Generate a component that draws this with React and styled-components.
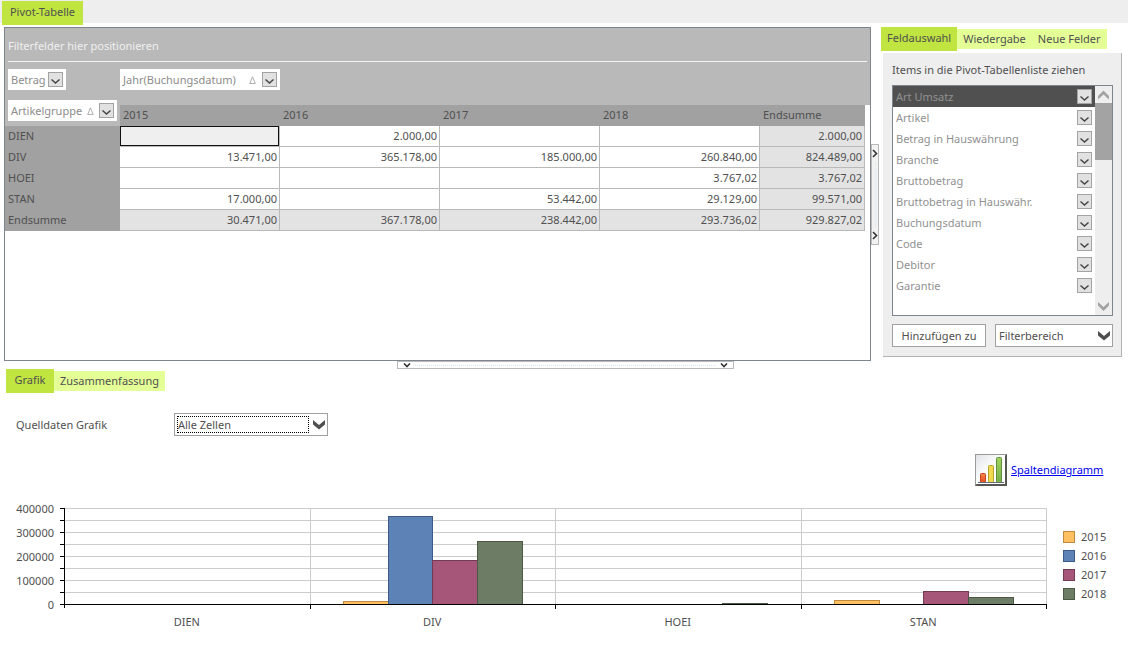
import React, { useState } from "react";
import styled, { createGlobalStyle } from "styled-components";

const GlobalStyle = createGlobalStyle`
    * {
        box-sizing: border-box;
    }

    body {
        margin: 0;
        background: #fff;
        color: #505050;
        font-family: "Noto Sans", "Open Sans", sans-serif;
        font-size: 11px;
        line-height: 16px;
    }

    button, select {
        color: inherit;
        font: inherit;
    }
`;

const TopBar = styled.header`
    display: flex;
    height: 23px;
    padding: 1px 2px 0;
    background: #eee;
`;

const TabList = styled.div`
    display: flex;
    align-items: center;
    height: 24px;
    padding-left: ${props => props.$indent || "0"};
`;

const Tab = styled.button`
    min-width: ${props => props.$minWidth || "48px"};
    height: ${props => props.$active ? "24px" : "20px"};
    padding: 0 6px;
    padding-bottom: ${props => props.$active ? "2px" : "0"};
    border: 0;
    background: ${props => props.$active ? "#c0e440" : "#e4ff96"};
    white-space: nowrap;
    cursor: pointer;
`;

const Workspace = styled.main`
    display: flex;
    align-items: stretch;
    padding: 4px 6px 0 4px;
`;

const PivotPanel = styled.section`
    flex: 1;
    min-width: 0;
    min-height: 334px;
    border: 1px solid #7e858e;
`;

const FieldArea = styled.div`
    height: 77px;
    padding: 0 3px;
    background: #b9b9b9;
`;

const FilterZone = styled.div`
    height: 34px;
    padding: 10px 0 0 0;
    border-bottom: 1px solid #f4f4f4;
    color: #f0f0f0;
`;

const FilterChips = styled.div`
    display: grid;
    grid-template-columns: 112px auto;
    justify-content: start;
    padding-top: 7px;
`;

const ChipBox = styled.div`
    display: flex;
    align-items: center;
    gap: ${props => props.$gap || "2px"};
    width: ${props => props.$width};
    height: 21px;
    padding: 0 3px;
    background: #fff;
    color: #8c8c8c;
    font-weight: 400;
`;

const ChipText = styled.span`
    flex: 1;
    white-space: nowrap;
`;

const DropButton = styled.button`
    display: grid;
    place-items: center;
    flex: none;
    width: 15px;
    height: 15px;
    padding: 4px 0 0;
    border: 1px solid #a3a3a3;
    background: #e1e1e1;
    cursor: pointer;
`;

const PivotTable = styled.table`
    width: calc(100% - 5px);
    border-collapse: separate;
    border-spacing: 0;
    table-layout: fixed;
`;

const HeadCell = styled.th`
    width: ${props => props.$width || "auto"};
    height: 21px;
    padding: 0 3px 1px;
    background: #a1a1a1;
    font-weight: 400;
    text-align: left;
`;

const CornerCell = styled.th`
    width: 115px;
    padding: 0 3px;
    background: #b9b9b9;
    text-align: left;
`;

const CornerChip = styled.div`
    margin: -5px 0 5px;
`;

const RowHead = styled.th`
    height: 21px;
    padding: 0 3px 1px;
    background: #a1a1a1;
    font-weight: 400;
    text-align: left;
`;

const Cell = styled.td`
    height: 21px;
    padding: 0 2px;
    border-right: 1px solid #b9b9b9;
    border-bottom: 1px solid #b9b9b9;
    background: ${props => props.$total ? "#e3e3e3" : props.$selected ? "#efefef" : "#fff"};
    box-shadow: ${props => props.$selected ? "inset 0 0 0 1px #111" : "none"};
    text-align: right;
`;

const Splitter = styled.button`
    display: flex;
    flex-direction: ${props => props.$vertical ? "column" : "row"};
    align-items: center;
    justify-content: space-between;
    align-self: ${props => props.$vertical ? "flex-start" : "center"};
    width: ${props => props.$vertical ? "8px" : "337px"};
    height: ${props => props.$vertical ? "101px" : "8px"};
    margin-top: ${props => props.$vertical ? "117px" : "0"};
    padding: ${props => props.$vertical ? "4px 0" : "0 5px"};
    border: 1px solid #b9b9b9;
    background: ${props => props.$vertical ? "#f2f2f2" : "#fff"};
    cursor: pointer;
`;

const Grip = styled.span`
    flex: 1;
    margin: 4px;
    border: 0 dotted #d5e6ef;
    border-width: ${props => props.$vertical ? "0 0 0 1px" : "1px 0 0 0"};
`;

const FieldColumn = styled.aside`
    flex: none;
    width: 241px;
    margin-left: 2px;
`;

const FieldPanel = styled.div`
    margin: 2px 0 0 2px;
    padding: 9px 8px 9px 9px;
    border-right: 1px solid #b3b3b3;
    border-bottom: 1px solid #b3b3b3;
    background: #eee;
`;

const FieldBox = styled.div`
    display: flex;
    height: 231px;
    margin-top: 7px;
    border: 1px solid #7e858e;
    background: #fff;
`;

const FieldList = styled.ul`
    flex: 1;
    margin: 0;
    padding: 0;
    list-style: none;
`;

const FieldItem = styled.li`
    display: flex;
    align-items: center;
    justify-content: space-between;
    height: 21px;
    padding: 0 3px;
    background: ${props => props.$selected ? "#505050" : "transparent"};
    color: #919191;
`;

const ScrollBar = styled.div`
    display: flex;
    flex-direction: column;
    align-items: center;
    width: 17px;
    background: #eee;
`;

const ScrollThumb = styled.div`
    width: 100%;
    height: 57px;
    margin-bottom: auto;
    background: #a3a3a3;
`;

const FieldActions = styled.div`
    display: grid;
    grid-template-columns: 94px 118px;
    justify-content: space-between;
    margin-top: 8px;
`;

const ActionButton = styled.button`
    height: 23px;
    padding: 0;
    border: 1px solid #a0a0a0;
    background: #fff;
    cursor: pointer;
`;

const SelectFrame = styled.div`
    display: grid;
    align-items: center;
    width: ${props => props.$width || "100%"};
    height: 23px;
    border: 1px solid #a0a0a0;
    background: #fff;

    > * {
        grid-area: 1 / 1;
    }

    > svg {
        justify-self: end;
        margin-right: 2px;
        pointer-events: none;
    }
`;

const StyledSelect = styled.select`
    width: 100%;
    height: 100%;
    padding: 0 18px 0 3px;
    border: 0;
    outline: 0;
    background: transparent;
    appearance: none;
`;

const FocusRing = styled.span`
    height: 17px;
    margin: 0 18px 0 2px;
    border: 1px dotted #000;
    pointer-events: none;
`;

const SplitRow = styled.div`
    display: flex;
    flex-direction: column;
    height: 8px;
    padding-left: 3px;
`;

const SourceRow = styled.div`
    display: flex;
    align-items: center;
    padding: 20px 16px 0;
`;

const SourceLabel = styled.label`
    width: 158px;
`;

const ChartTypeRow = styled.div`
    display: flex;
    align-items: center;
    justify-content: flex-end;
    gap: 4px;
    padding: 18px 23px 0 0;
`;

const ChartLink = styled.a`
    min-width: 94px;
    color: #00e;
    text-decoration: underline;
`;

const ChartArea = styled.figure`
    display: grid;
    grid-template-columns: 1fr 65px;
    margin: 22px 0 0;
    padding: 0 0 12px 64px;
`;

const PlotSvg = styled.svg`
    width: calc(100% - 17px);
    height: 128px;
    overflow: visible;
    fill: #505050;
`;

const Legend = styled.ul`
    display: flex;
    flex-direction: column;
    gap: 3px;
    margin: 0;
    padding: 21px 0 0;
    list-style: none;
`;

const LegendItem = styled.li`
    display: flex;
    align-items: center;
    gap: 6px;
`;

const Swatch = styled.span`
    width: 12px;
    height: 12px;
    border: 1px solid ${props => props.$edge};
    background: ${props => props.$fill};
`;

const years = ["2015", "2016", "2017", "2018"];

const rows = [
    { name: "DIEN", cells: ["", "2.000,00", "", "", "2.000,00"] },
    { name: "DIV", cells: ["13.471,00", "365.178,00", "185.000,00", "260.840,00", "824.489,00"] },
    { name: "HOEI", cells: ["", "", "", "3.767,02", "3.767,02"] },
    { name: "STAN", cells: ["17.000,00", "", "53.442,00", "29.129,00", "99.571,00"] },
    { name: "Endsumme", cells: ["30.471,00", "367.178,00", "238.442,00", "293.736,02", "929.827,02"] }
];

const fields = [
    "Art Umsatz", "Artikel", "Betrag in Hauswährung", "Branche", "Bruttobetrag",
    "Bruttobetrag in Hauswähr.", "Buchungsdatum", "Code", "Debitor", "Garantie"
];

const series = [
    { name: "2015", fill: "#ffc062", edge: "#bf8a3e" },
    { name: "2016", fill: "#5d82b5", edge: "#3c5a85" },
    { name: "2017", fill: "#a55679", edge: "#733a54" },
    { name: "2018", fill: "#6c7c65", edge: "#4b5946" }
];

const chartData = [
    { name: "DIEN", values: [0, 0, 0, 0] },
    { name: "DIV", values: [13471, 365178, 185000, 260840] },
    { name: "HOEI", values: [0, 0, 0, 3767] },
    { name: "STAN", values: [17000, 0, 53442, 29129] }
];

const SmallChevron = () => (
    <svg width="9" height="5" viewBox="0 0 9 5">
        <path d="M0.5 0.5L4.5 4L8.5 0.5" fill="none" stroke="#444" strokeWidth="1.4" />
    </svg>
);

const SelectChevron = () => (
    <svg width="12" height="10" viewBox="0 0 12 10">
        <path d="M0 0L6 5L12 0V4.5L6 9.5L0 4.5Z" fill="#505050" />
    </svg>
);

const ScrollArrow = ({ up }) => (
    <svg width="17" height="17" viewBox="0 0 17 17">
        <path
            d={up ? "M3 10L8.5 4.5L14 10V13.5L8.5 8.5L3 13.5Z" : "M3 4L8.5 9L14 4V7.5L8.5 13L3 7.5Z"}
            fill="#a3a3a3"
        />
    </svg>
);

const SplitArrow = ({ vertical }) => (
    vertical
        ? <svg width="6" height="9" viewBox="0 0 6 9"><path d="M1 1L4.5 4.5L1 8" fill="none" stroke="#333" strokeWidth="1.6" /></svg>
        : <svg width="8" height="5" viewBox="0 0 8 5"><path d="M1 0.5L4 3.5L7 0.5" fill="none" stroke="#333" strokeWidth="1.6" /></svg>
);

const SortMark = () => (
    <svg width="7" height="8" viewBox="0 0 7 8">
        <path d="M3.5 0.8L6.3 7.5H0.7Z" fill="none" stroke="#999" strokeWidth="0.8" />
    </svg>
);

const ColumnChartIcon = () => (
    <svg width="32" height="32" viewBox="0 0 32 32">
        <defs>
            <linearGradient id="iconBack" x1="0" y1="0" x2="1" y2="1">
                <stop offset="0" stopColor="#dfe3e6" />
                <stop offset="0.5" stopColor="#fff" />
            </linearGradient>
            <linearGradient id="iconGreen" x1="0" y1="0" x2="0" y2="1">
                <stop offset="0" stopColor="#a3d45c" />
                <stop offset="1" stopColor="#78b04a" />
            </linearGradient>
            <linearGradient id="iconRed" x1="0" y1="0" x2="0" y2="1">
                <stop offset="0" stopColor="#f58a4a" />
                <stop offset="1" stopColor="#e64d1e" />
            </linearGradient>
        </defs>
        <rect width="32" height="32" fill="#9a9a9a" />
        <path d="M32 0V32H0L2 30H30V2Z" fill="#555" />
        <rect x="1" y="1" width="29" height="29" fill="url(#iconBack)" />
        <rect x="5.5" y="19.5" width="5" height="9" rx="1" fill="url(#iconRed)" stroke="#c9401c" />
        <rect x="13.5" y="11.5" width="5" height="17" rx="1" fill="#f0d94e" stroke="#b5a428" />
        <rect x="21.5" y="3.5" width="5" height="25" rx="1" fill="url(#iconGreen)" stroke="#5f9040" />
        <path d="M3 28.5H29" stroke="#6b6b78" />
    </svg>
);

const Chip = ({ text, width, gap, sorted }) => (
    <ChipBox $width={width} $gap={gap}>
        <ChipText>{text}</ChipText>
        {sorted && <SortMark />}
        <DropButton aria-label={`${text} filtern`}><SmallChevron /></DropButton>
    </ChipBox>
);

const Tabs = ({ names, indent, minWidth }) => {
    const [active, setActive] = useState(names[0]);

    return (
        <TabList role="tablist" $indent={indent}>
            {names.map(name => (
                <Tab
                    key={name}
                    role="tab"
                    aria-selected={active === name}
                    $active={active === name}
                    $minWidth={minWidth}
                    onClick={() => setActive(name)}
                >
                    {name}
                </Tab>
            ))}
        </TabList>
    );
};

const Pivot = () => (
    <PivotPanel>
        <FieldArea>
            <FilterZone>Filterfelder hier positionieren</FilterZone>
            <FilterChips>
                <Chip text="Betrag" width="58px" />
                <Chip text="Jahr(Buchungsdatum)" width="160px" gap="6px" sorted />
            </FilterChips>
        </FieldArea>
        <PivotTable>
            <thead>
                <tr>
                    <CornerCell>
                        <CornerChip><Chip text="Artikelgruppe" width="109px" gap="5px" sorted /></CornerChip>
                    </CornerCell>
                    {years.map(year => <HeadCell key={year} scope="col">{year}</HeadCell>)}
                    <HeadCell scope="col" $width="105px">Endsumme</HeadCell>
                </tr>
            </thead>
            <tbody>
                {rows.map((row, rowIndex) => (
                    <tr key={row.name}>
                        <RowHead scope="row">{row.name}</RowHead>
                        {row.cells.map((cell, index) => (
                            <Cell
                                key={index}
                                $total={index === 4 || rowIndex === 4}
                                $selected={index === 0 && rowIndex === 0}
                            >
                                {cell}
                            </Cell>
                        ))}
                    </tr>
                ))}
            </tbody>
        </PivotTable>
    </PivotPanel>
);

const FieldChooser = () => (
    <FieldColumn>
        <Tabs names={["Feldauswahl", "Wiedergabe", "Neue Felder"]} />
        <FieldPanel>
            Items in die Pivot-Tabellenliste ziehen
            <FieldBox>
                <FieldList>
                    {fields.map((field, index) => (
                        <FieldItem key={field} $selected={index === 0}>
                            {field}
                            <DropButton aria-label={`${field} filtern`}><SmallChevron /></DropButton>
                        </FieldItem>
                    ))}
                </FieldList>
                <ScrollBar>
                    <ScrollArrow up />
                    <ScrollThumb />
                    <ScrollArrow />
                </ScrollBar>
            </FieldBox>
            <FieldActions>
                <ActionButton>Hinzufügen zu</ActionButton>
                <SelectFrame>
                    <StyledSelect aria-label="Zielbereich">
                        <option>Filterbereich</option>
                    </StyledSelect>
                    <SelectChevron />
                </SelectFrame>
            </FieldActions>
        </FieldPanel>
    </FieldColumn>
);

const plotHeight = 96;
const maxValue = 400000;
const groupWidth = 100 / chartData.length;
const barWidth = groupWidth / 5.5;

const ColumnChart = () => (
    <ChartArea>
        <PlotSvg role="img" aria-label="Spaltendiagramm">
            <g shapeRendering="crispEdges">
                {[...Array(9).keys()].map(i => (
                    <React.Fragment key={i}>
                        <rect x="0" y={i * 12} width="100%" height="1" fill="#ccc" />
                        <rect x="-4" y={i * 12} width="4" height="1" fill="#000" />
                    </React.Fragment>
                ))}
                {chartData.map((group, i) => (
                    <rect key={group.name} x={`${(i + 1) * groupWidth}%`} y="0" width="1" height={plotHeight} fill="#ccc" />
                ))}
                <g transform="translate(0.5 0.5)">
                    {chartData.map((group, i) => group.values.map((value, j) => value > 0 && (
                        <rect
                            key={`${group.name}-${j}`}
                            x={`${i * groupWidth + (j + 0.75) * barWidth}%`}
                            y={plotHeight - Math.round(value / maxValue * plotHeight)}
                            width={`${barWidth}%`}
                            height={Math.round(value / maxValue * plotHeight)}
                            fill={series[j].fill}
                            stroke={series[j].edge}
                        />
                    )))}
                </g>
                <rect x="0" y="0" width="1" height="100" fill="#000" />
                <rect x="0" y={plotHeight} width="100%" height="1" fill="#000" />
                {chartData.map((group, i) => (
                    <rect key={group.name} x={`${(i + 1) * groupWidth}%`} y={plotHeight} width="1" height="5" fill="#000" />
                ))}
            </g>
            {[400000, 300000, 200000, 100000, 0].map((tick, i) => (
                <text key={tick} x="-10" y={i * 24 + 5} textAnchor="end">{tick}</text>
            ))}
            {chartData.map((group, i) => (
                <text key={group.name} x={`${(i + 0.5) * groupWidth}%`} y="118" textAnchor="middle">
                    {group.name}
                </text>
            ))}
        </PlotSvg>
        <Legend>
            {series.map(item => (
                <LegendItem key={item.name}>
                    <Swatch $fill={item.fill} $edge={item.edge} />
                    {item.name}
                </LegendItem>
            ))}
        </Legend>
    </ChartArea>
);

const App = () => (
    <>
        <GlobalStyle />
        <TopBar>
            <Tabs names={["Pivot-Tabelle"]} minWidth="81px" />
        </TopBar>
        <Workspace>
            <Pivot />
            <Splitter $vertical aria-label="Feldliste ausblenden">
                <SplitArrow vertical />
                <Grip $vertical />
                <SplitArrow vertical />
            </Splitter>
            <FieldChooser />
        </Workspace>
        <SplitRow>
            <Splitter aria-label="Grafik ausblenden">
                <SplitArrow />
                <Grip />
                <SplitArrow />
            </Splitter>
        </SplitRow>
        <Tabs names={["Grafik", "Zusammenfassung"]} indent="6px" />
        <SourceRow>
            <SourceLabel htmlFor="source">Quelldaten Grafik</SourceLabel>
            <SelectFrame $width="154px">
                <StyledSelect id="source">
                    <option>Alle Zellen</option>
                </StyledSelect>
                <FocusRing />
                <SelectChevron />
            </SelectFrame>
        </SourceRow>
        <ChartTypeRow>
            <ColumnChartIcon />
            <ChartLink href="#spaltendiagramm">Spaltendiagramm</ChartLink>
        </ChartTypeRow>
        <ColumnChart />
    </>
);

export default App;
